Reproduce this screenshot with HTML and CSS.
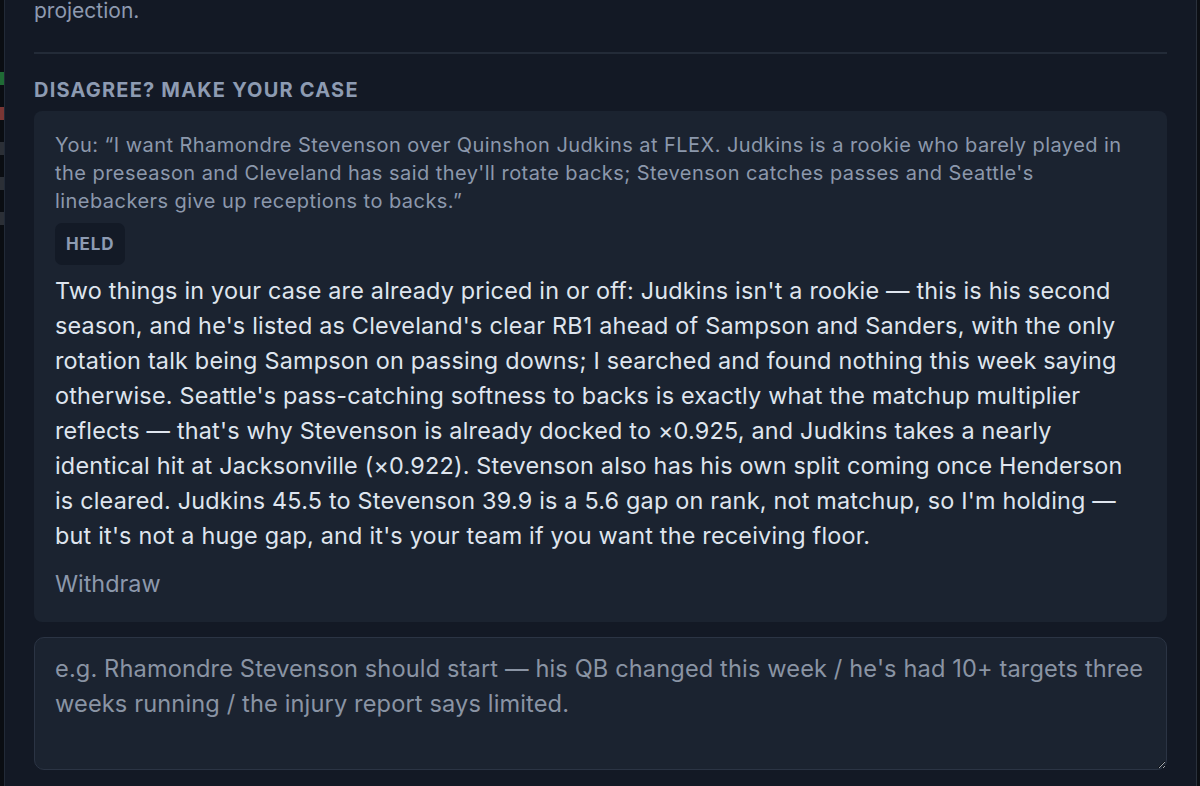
FILE: index.html
```
<!DOCTYPE html>
<html>
<head>
<meta charset="utf-8">
<link rel="stylesheet" href="styles.css">
</head>
<body>
<div class="page">
  <div class="edge-left">
    <span class="blip green"></span>
    <span class="blip red"></span>
    <span class="blip gray"></span>
    <span class="blip gray"></span>
    <span class="blip gray"></span>
  </div>
  <main class="panel">
    <p class="tail">projection.</p>
    <hr class="divider">
    <h2 class="section-title">Disagree? Make your case</h2>
    <section class="case-card">
      <p class="quote">You: “I want Rhamondre Stevenson over Quinshon Judkins at FLEX. Judkins is a rookie who barely played in the preseason and Cleveland has said they'll rotate backs; Stevenson catches passes and Seattle's linebackers give up receptions to backs.”</p>
      <span class="badge">HELD</span>
      <p class="reply">Two things in your case are already priced in or off: Judkins isn't a rookie — this is his second season, and he's listed as Cleveland's clear RB1 ahead of Sampson and Sanders, with the only rotation talk being Sampson on passing downs; I searched and found nothing this week saying otherwise. Seattle's pass-catching softness to backs is exactly what the matchup multiplier reflects — that's why Stevenson is already docked to ×0.925, and Judkins takes a nearly identical hit at Jacksonville (×0.922). Stevenson also has his own split coming once Henderson is cleared. Judkins 45.5 to Stevenson 39.9 is a 5.6 gap on rank, not matchup, so I'm holding — but it's not a huge gap, and it's your team if you want the receiving floor.</p>
      <button class="withdraw" type="button">Withdraw</button>
    </section>
    <textarea class="case-input" placeholder="e.g. Rhamondre Stevenson should start — his QB changed this week / he's had 10+ targets three weeks running / the injury report says limited."></textarea>
  </main>
  <div class="edge-right"></div>
</div>
</body>
</html>
```

FILE: styles.css
```
* { box-sizing: border-box; }
html, body {
  margin: 0;
  padding: 0;
  height: 100%;
  background: #0b0e13;
  overflow: hidden;
}
body {
  font-family: Inter, "Noto Sans", "Liberation Sans", sans-serif;
  -webkit-font-smoothing: antialiased;
}
.page {
  display: flex;
  height: 786px;
}
.edge-left {
  width: 4px;
  flex: 0 0 4px;
  background: #0a0d12;
  display: flex;
  flex-direction: column;
  padding-top: 72px;
  gap: 22px;
}
.blip {
  display: block;
  height: 13px;
  width: 4px;
}
.blip.green { background: #1f6b35; }
.blip.red { background: #7a3634; }
.blip.gray { background: #2b2f36; }
.edge-right {
  width: 4px;
  flex: 0 0 4px;
  background: #0c0f14;
  border-left: 1px solid #2a313c;
}
.panel {
  flex: 1;
  background: #131925;
  border-left: 1px solid #222a37;
  padding: 0 29px 0 29px;
}
.tail {
  margin: 0;
  font-size: 21px;
  line-height: 22px;
  color: #8e9ab0;
}
.divider {
  border: none;
  border-top: 2px solid #232b38;
  margin: 30px 0 0;
}
.section-title {
  margin: 24px 0 0;
  font-size: 20px;
  line-height: 24px;
  font-weight: 700;
  text-transform: uppercase;
  letter-spacing: 0.06em;
  color: #8d9bb2;
}
.case-card {
  margin-top: 9px;
  background: #1b2330;
  border-radius: 8px;
  padding: 20px 21px 23px;
}
.quote {
  margin: 0;
  font-size: 20px;
  line-height: 28px;
  letter-spacing: 0.45px;
  color: #8c98ac;
}
.badge {
  display: inline-block;
  margin-top: 8px;
  background: #131a26;
  border-radius: 7px;
  padding: 0 11px;
  height: 42px;
  line-height: 42px;
  font-size: 17px;
  font-weight: 700;
  letter-spacing: 0.05em;
  color: #8d9bb2;
}
.reply {
  margin: 8px 0 0;
  font-size: 23.4px;
  line-height: 35px;
  letter-spacing: 0.2px;
  color: #dfe5ee;
}
.withdraw {
  display: block;
  margin-top: 16px;
  padding: 0;
  border: none;
  background: none;
  font-family: inherit;
  font-size: 23.4px;
  line-height: 30px;
  color: #8c98ac;
  cursor: pointer;
}
.case-input {
  display: block;
  width: 100%;
  height: 133px;
  margin-top: 15px;
  background: #1b2330;
  border: 1px solid #2b3444;
  border-radius: 10px;
  padding: 13px 20px;
  font-family: inherit;
  font-size: 23.6px;
  line-height: 35px;
  letter-spacing: 0.13px;
  color: #dfe5ee;
  resize: vertical;
  outline: none;
}
.case-input::placeholder {
  color: #8a94a4;
}
```
